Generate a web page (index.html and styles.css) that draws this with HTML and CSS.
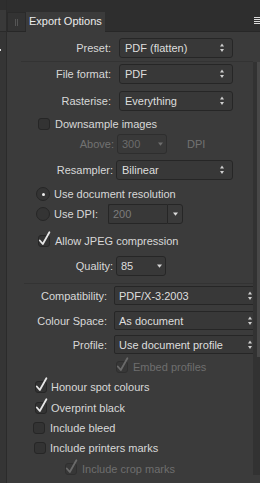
FILE: index.html
```html
<!DOCTYPE html>
<html>
<head>
<meta charset="utf-8">
<link rel="stylesheet" href="styles.css">
</head>
<body>
<div class="window">
  <div class="side">
    <div class="side-cap"></div>
    <div class="side-tab"></div>
    <div class="side-dot"></div>
  </div>
  <div class="main">
    <div class="topbar">
      <div class="grip"><i></i><i></i></div>
      <div class="tab">Export Options</div>
      <div class="menu">
        <svg width="6" height="8" viewBox="0 0 6 8"><g stroke="#dcdcdc" stroke-width="1"><line x1="0" y1="0.5" x2="6" y2="0.5"/><line x1="0" y1="2.5" x2="6" y2="2.5"/><line x1="0" y1="4.5" x2="6" y2="4.5"/><line x1="0" y1="6.5" x2="6" y2="6.5"/></g></svg>
      </div>
    </div>
    <div class="body">
      <div class="form">
        <div class="row r-preset">
          <span class="lbl l-a">Preset:</span>
          <div class="sel s-a"><span>PDF (flatten)</span><svg class="ud" width="4" height="10" viewBox="0 0 4 10"><polygon points="0,3.5 4,3.5 2,0.5" fill="#cfcfcf"/><polygon points="0,6 4,6 2,9" fill="#cfcfcf"/></svg></div>
        </div>
        <div class="sep sep1"></div>
        <div class="row r-format">
          <span class="lbl l-a">File format:</span>
          <div class="sel s-a"><span>PDF</span><svg class="ud" width="4" height="10" viewBox="0 0 4 10"><polygon points="0,3.5 4,3.5 2,0.5" fill="#cfcfcf"/><polygon points="0,6 4,6 2,9" fill="#cfcfcf"/></svg></div>
        </div>
        <div class="row r-raster">
          <span class="lbl l-a">Rasterise:</span>
          <div class="sel s-a"><span>Everything</span><svg class="ud" width="4" height="10" viewBox="0 0 4 10"><polygon points="0,3.5 4,3.5 2,0.5" fill="#cfcfcf"/><polygon points="0,6 4,6 2,9" fill="#cfcfcf"/></svg></div>
        </div>
        <div class="row r-down">
          <span class="cb"></span><span class="cb-text">Downsample images</span>
        </div>
        <div class="row r-above">
          <span class="lbl l-above dis">Above:</span>
          <div class="sel s-small dis"><span>300</span><svg width="5" height="4" viewBox="0 0 5 4"><polygon points="0,0.5 5,0.5 2.5,3.8" fill="#6e6e6e"/></svg></div>
          <span class="dpi dis">DPI</span>
        </div>
        <div class="row r-resampler">
          <span class="lbl l-res">Resampler:</span>
          <div class="sel s-res"><span>Bilinear</span><svg class="ud" width="4" height="10" viewBox="0 0 4 10"><polygon points="0,3.5 4,3.5 2,0.5" fill="#cfcfcf"/><polygon points="0,6 4,6 2,9" fill="#cfcfcf"/></svg></div>
        </div>
        <div class="row r-radio1">
          <span class="rb on"></span><span class="rb-text">Use document resolution</span>
        </div>
        <div class="row r-radio2">
          <span class="rb"></span><span class="rb-text t-dpi">Use DPI:</span>
          <div class="field">200</div>
          <div class="field-btn"><svg width="5" height="4" viewBox="0 0 5 4"><polygon points="0,0.5 5,0.5 2.5,3.8" fill="#dcdcdc"/></svg></div>
        </div>
        <div class="row r-jpeg">
          <span class="cb"><svg class="tick" width="13" height="17" viewBox="0 0 13 17"><path d="M1.8,10.5 L4.8,14 L11.4,2.2" fill="none" stroke="#e6e6e6" stroke-width="1.8" stroke-linecap="round" stroke-linejoin="round"/></svg></span><span class="cb-text">Allow JPEG compression</span>
        </div>
        <div class="row r-quality">
          <span class="lbl l-res">Quality:</span>
          <div class="sel s-small q"><span>85</span><svg width="5" height="4" viewBox="0 0 5 4"><polygon points="0,0.5 5,0.5 2.5,3.8" fill="#d6d6d6"/></svg></div>
        </div>
        <div class="sep sep2"></div>
        <div class="row r-compat">
          <span class="lbl l-low">Compatibility:</span>
          <div class="sel s-low"><span>PDF/X-3:2003</span><svg class="ud" width="4" height="10" viewBox="0 0 4 10"><polygon points="0,3.5 4,3.5 2,0.5" fill="#cfcfcf"/><polygon points="0,6 4,6 2,9" fill="#cfcfcf"/></svg></div>
        </div>
        <div class="row r-space">
          <span class="lbl l-low">Colour Space:</span>
          <div class="sel s-low"><span>As document</span><svg class="ud" width="4" height="10" viewBox="0 0 4 10"><polygon points="0,3.5 4,3.5 2,0.5" fill="#cfcfcf"/><polygon points="0,6 4,6 2,9" fill="#cfcfcf"/></svg></div>
        </div>
        <div class="row r-profile">
          <span class="lbl l-low">Profile:</span>
          <div class="sel s-low"><span>Use document profile</span><svg class="ud" width="4" height="10" viewBox="0 0 4 10"><polygon points="0,3.5 4,3.5 2,0.5" fill="#cfcfcf"/><polygon points="0,6 4,6 2,9" fill="#cfcfcf"/></svg></div>
        </div>
        <div class="row r-embed">
          <span class="cb dis-cb"><svg class="tick" width="13" height="17" viewBox="0 0 13 17"><path d="M1.8,10.5 L4.8,14 L11.4,2.2" fill="none" stroke="#6a6a6a" stroke-width="1.8" stroke-linecap="round" stroke-linejoin="round"/></svg></span><span class="cb-text dis">Embed profiles</span>
        </div>
        <div class="row r-honour">
          <span class="cb"><svg class="tick" width="13" height="17" viewBox="0 0 13 17"><path d="M1.8,10.5 L4.8,14 L11.4,2.2" fill="none" stroke="#e6e6e6" stroke-width="1.8" stroke-linecap="round" stroke-linejoin="round"/></svg></span><span class="cb-text g4">Honour spot colours</span>
        </div>
        <div class="row r-over">
          <span class="cb"><svg class="tick" width="13" height="17" viewBox="0 0 13 17"><path d="M1.8,10.5 L4.8,14 L11.4,2.2" fill="none" stroke="#e6e6e6" stroke-width="1.8" stroke-linecap="round" stroke-linejoin="round"/></svg></span><span class="cb-text g4">Overprint black</span>
        </div>
        <div class="row r-bleed">
          <span class="cb"></span><span class="cb-text">Include bleed</span>
        </div>
        <div class="row r-marks">
          <span class="cb"></span><span class="cb-text g4">Include printers marks</span>
        </div>
        <div class="row r-crop">
          <span class="cb dis-cb"><svg class="tick" width="13" height="17" viewBox="0 0 13 17"><path d="M1.8,10.5 L4.8,14 L11.4,2.2" fill="none" stroke="#6a6a6a" stroke-width="1.8" stroke-linecap="round" stroke-linejoin="round"/></svg></span><span class="cb-text dis">Include crop marks</span>
        </div>
      </div>
      <div class="track"><div class="thumb"></div></div>
    </div>
  </div>
</div>
</body>
</html>
```

FILE: styles.css
```css
html, body {
  margin: 0;
  padding: 0;
}
body {
  background: #3b3b3b;
  font-family: "Liberation Sans", Arial, sans-serif;
  font-size: 11px;
  color: #d6d6d6;
}
.window {
  display: flex;
  width: 260px;
  height: 483px;
  overflow: hidden;
}
.side {
  width: 6px;
  flex-shrink: 0;
  border-right: 1px solid #2b2b2b;
  background: #353535;
  display: flex;
  flex-direction: column;
}
.side-cap {
  height: 10px;
  background: #2e2e2e;
}
.side-tab {
  height: 22px;
  box-sizing: border-box;
  background: #393939;
  border-bottom: 1px solid #2a2a2a;
}
.side-dot {
  margin-top: 17px;
  width: 1px;
  height: 2px;
  background: #e0e0e0;
}
.main {
  flex: 1;
  min-width: 0;
  display: flex;
  flex-direction: column;
}
.topbar {
  height: 31px;
  flex-shrink: 0;
  background: #2e2e2e;
  border-bottom: 1px solid #272727;
  display: flex;
  align-items: flex-end;
}
.grip {
  width: 19px;
  height: 19px;
  box-sizing: border-box;
  background: #333333;
  border: 1px solid #2a2a2a;
  border-bottom: none;
  display: flex;
  justify-content: center;
  align-items: center;
  gap: 1px;
}
.grip i {
  display: block;
  width: 1px;
  height: 7px;
  background: #555555;
}
.tab {
  width: 79px;
  height: 20px;
  margin-bottom: -1px;
  box-sizing: border-box;
  padding-left: 3px;
  line-height: 19px;
  background: #3b3b3b;
  color: #ececec;
  white-space: nowrap;
}
.menu {
  margin-left: auto;
  align-self: flex-start;
  margin-top: 17px;
  width: 6px;
  height: 8px;
  display: flex;
}
.body {
  flex: 1;
  display: flex;
  min-height: 0;
}
.form {
  width: 246px;
  flex-shrink: 0;
  overflow: hidden;
  display: flex;
  flex-direction: column;
}
.track {
  width: 7px;
  margin-top: 30px;
  height: 413px;
  background: #323232;
  display: flex;
  justify-content: flex-end;
}
.thumb {
  width: 3px;
  height: 295px;
  background: #484848;
}

/* rows */
.row {
  display: flex;
  align-items: center;
  flex-shrink: 0;
  white-space: nowrap;
}
.lbl {
  flex-shrink: 0;
  text-align: right;
  color: #d8d8d8;
}
.dis { color: #727272; }

.l-a { width: 104px; margin-right: 8px; }
.l-above { width: 107px; margin-right: 3px; }
.l-res { width: 106px; margin-right: 3px; }
.l-low { width: 100px; margin-right: 7px; }

.sel {
  height: 20px;
  box-sizing: border-box;
  flex-shrink: 0;
  display: flex;
  align-items: center;
  justify-content: space-between;
  border: 1px solid #262626;
  border-radius: 3px;
  background: #383838;
  color: #dedede;
  padding: 0 8px 0 5px;
}
.sel svg { display: block; }
.s-a { width: 114px; }
.s-res { width: 117px; }
.s-small { width: 50px; padding: 0 3px 0 4px; }
.s-small.q { width: 50px; }
.sel.dis {
  color: #6c6c6c;
  border-color: #2e2e2e;
  background: #393939;
}
.s-low {
  width: 144px;
  height: 19px;
  border-radius: 2px;
  padding: 0 5px 0 4px;
}
.dpi { margin-left: 20px; }

.sep {
  height: 1px;
  flex-shrink: 0;
  background: #333333;
}
.sep1 { margin-left: 14px; margin-top: 3px; }
.sep2 { margin-left: 17px; margin-top: 7px; }

.cb {
  width: 12px;
  height: 12px;
  box-sizing: border-box;
  flex-shrink: 0;
  position: relative;
  border: 1px solid #262626;
  border-radius: 3px;
  background: #333333;
}
.cb.dis-cb {
  border-color: #2f2f2f;
  background: #373737;
}
.cb .tick {
  position: absolute;
  left: -1px;
  top: -6px;
  overflow: visible;
}
.cb-text { margin-left: 5px; color: #d8d8d8; }
.cb-text.g4 { margin-left: 4px; }
.cb-text.dis { color: #6e6e6e; }

.rb {
  width: 14px;
  height: 14px;
  box-sizing: border-box;
  flex-shrink: 0;
  border-radius: 50%;
  border: 1px solid #262626;
  background: #343434;
  display: flex;
  align-items: center;
  justify-content: center;
}
.rb.on::after {
  content: "";
  width: 3px;
  height: 3px;
  border-radius: 50%;
  background: #eeeeee;
}
.rb-text { margin-left: 4px; color: #d8d8d8; }
.t-dpi { width: 54px; }

.field {
  width: 59px;
  height: 20px;
  box-sizing: border-box;
  border: 1px solid #262626;
  border-right: none;
  border-radius: 2px 0 0 2px;
  background: #383838;
  color: #7c7c7c;
  padding-left: 4px;
  line-height: 18px;
}
.field-btn {
  width: 16px;
  height: 20px;
  box-sizing: border-box;
  border: 1px solid #262626;
  border-radius: 0 3px 3px 0;
  background: #3a3a3a;
  display: flex;
  align-items: center;
  justify-content: center;
}
.field-btn svg { display: block; }

/* vertical rhythm and horizontal offsets */
.r-preset { margin-top: 6px; height: 20px; }
.r-format { margin-top: 2px; height: 20px; }
.r-raster { margin-top: 7px; height: 20px; }
.r-down { margin-top: 7px; height: 12px; margin-left: 31px; }
.r-above { margin-top: 4px; height: 20px; }
.r-resampler { margin-top: 6px; height: 20px; }
.r-radio1 { margin-top: 7px; height: 14px; margin-left: 29px; }
.r-radio2 { margin-top: 3px; height: 20px; margin-left: 29px; }
.r-jpeg { margin-top: 11px; height: 12px; margin-left: 31px; }
.r-quality { margin-top: 9px; height: 20px; }
.r-compat { margin-top: 2px; height: 19px; }
.r-space { margin-top: 6px; height: 19px; }
.r-profile { margin-top: 5px; height: 19px; }
.r-embed { margin-top: 7px; height: 12px; margin-left: 109px; }
.r-honour { margin-top: 8px; height: 12px; margin-left: 28px; }
.r-over { margin-top: 9px; height: 12px; margin-left: 28px; }
.r-bleed { margin-top: 8px; height: 12px; margin-left: 26px; }
.r-marks { margin-top: 8px; height: 12px; margin-left: 27px; }
.r-crop { margin-top: 9px; height: 12px; margin-left: 58px; }
```
